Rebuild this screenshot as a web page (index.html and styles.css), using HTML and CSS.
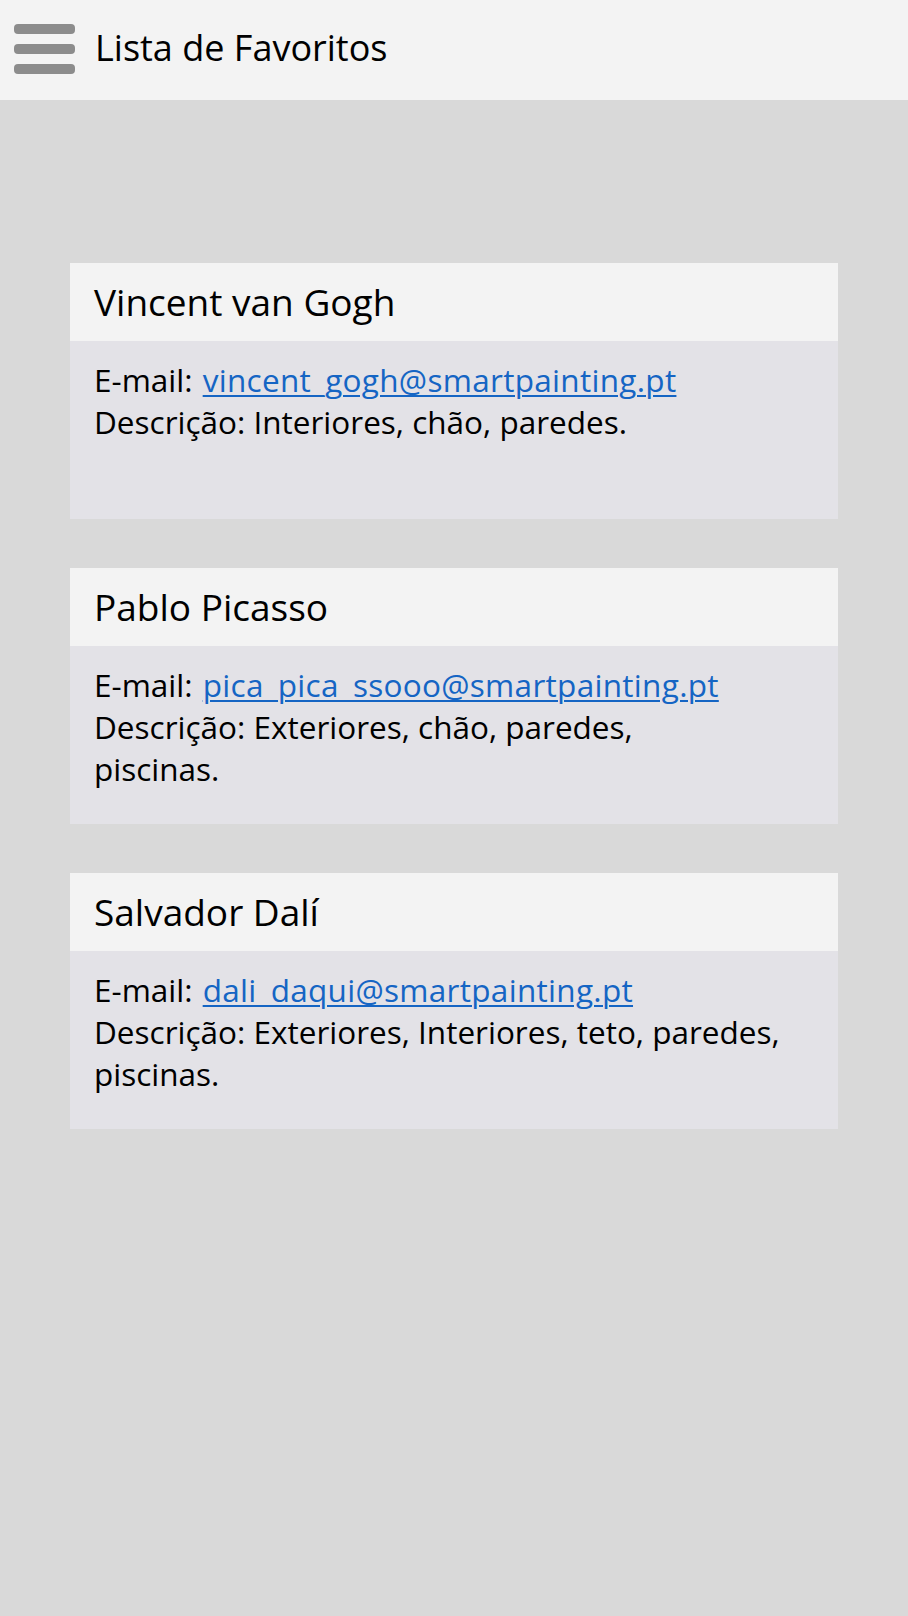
FILE: index.html
```html
<!DOCTYPE html>
<html lang="pt">
<head>
<meta charset="utf-8">
<title>Lista de Favoritos</title>
<link rel="stylesheet" href="styles.css">
</head>
<body>
<header class="topbar">
  <div class="menu-icon" aria-label="Menu">
    <span class="bar"></span>
    <span class="bar"></span>
    <span class="bar"></span>
  </div>
  <h1 class="topbar-title">Lista de Favoritos</h1>
</header>
<main class="list">
  <section class="card">
    <h2 class="card-title">Vincent van Gogh</h2>
    <div class="card-body">
      <p class="line">E-mail: <a href="#" class="mail">vincent_gogh@smartpainting.pt</a></p>
      <p class="line">Descrição: Interiores, chão, paredes.</p>
    </div>
  </section>
  <section class="card">
    <h2 class="card-title">Pablo Picasso</h2>
    <div class="card-body">
      <p class="line">E-mail: <a href="#" class="mail">pica_pica_ssooo@smartpainting.pt</a></p>
      <p class="line">Descrição: Exteriores, chão, paredes,<br>piscinas.</p>
    </div>
  </section>
  <section class="card">
    <h2 class="card-title">Salvador Dalí</h2>
    <div class="card-body">
      <p class="line">E-mail: <a href="#" class="mail">dali_daqui@smartpainting.pt</a></p>
      <p class="line">Descrição: Exteriores, Interiores, teto, paredes,<br>piscinas.</p>
    </div>
  </section>
</main>
</body>
</html>
```
FILE: styles.css
```css
html, body {
  margin: 0;
  padding: 0;
}
body {
  background: #d9d9d9;
  font-family: "Open Sans", "Noto Sans", sans-serif;
  color: #000;
  min-height: 1616px;
}
.topbar {
  height: 100px;
  background: #f3f3f3;
  display: flex;
  align-items: center;
  padding-left: 14px;
  box-sizing: border-box;
}
.menu-icon {
  display: flex;
  flex-direction: column;
  gap: 10px;
  width: 61px;
  margin-top: -2px;
}
.bar {
  display: block;
  height: 10px;
  border-radius: 4px;
  background: #8c8c8c;
}
.topbar-title {
  margin: 0 0 0 20px;
  font-weight: 400;
  font-size: 36px;
  line-height: 1;
  margin-top: -4px;
}
.list {
  padding: 163px 70px 0 70px;
  display: flex;
  flex-direction: column;
  gap: 49px;
}
.card {
  width: 768px;
}
.card-title {
  margin: 0;
  height: 78px;
  background: #f3f3f3;
  font-weight: 400;
  font-size: 37px;
  line-height: 78px;
  padding-left: 24px;
}
.card-body {
  height: 178px;
  box-sizing: border-box;
  background: #e3e2e7;
  padding: 18px 24px 0 24px;
}
.line {
  margin: 0;
  font-size: 31.5px;
  line-height: 42px;
}
.mail {
  color: #1565c4;
  margin-left: 2px;
  letter-spacing: 0.3px;
  text-decoration: underline;
  text-decoration-thickness: 2px;
  text-underline-offset: 3px;
}
```
